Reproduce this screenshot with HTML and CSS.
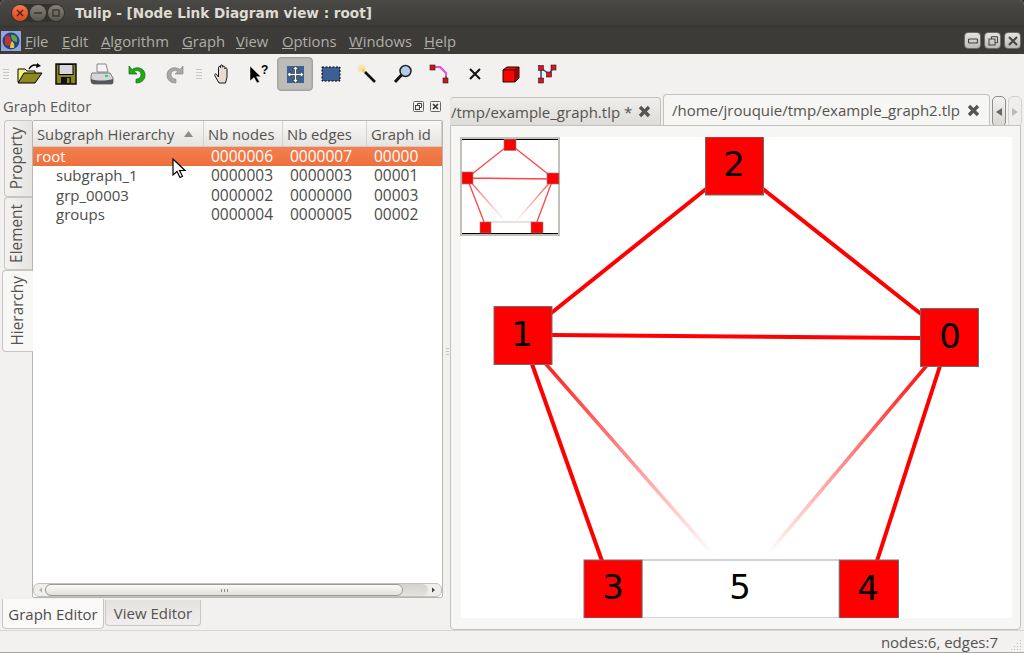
FILE: index.html
```html
<!DOCTYPE html>
<html lang="en">

<head>
    <meta charset="UTF-8">
    <meta name="viewport" content="width=device-width, initial-scale=1.0">
    <title>Tulip - [Node Link Diagram view : root]</title>
    <link rel="stylesheet" href="styles.css">
</head>

<body>
    <div id="window">
        <div id="titlebar">
            <div class="traffic">
                <span class="light close-light">
                    <svg width="8" height="8" viewBox="0 0 8 8"><path d="M1 1l6 6M7 1l-6 6" stroke="#5a1a08" stroke-width="1.4"/></svg>
                </span>
                <span class="light">
                    <svg width="8" height="8" viewBox="0 0 8 8"><path d="M0 4h8" stroke="#35332e" stroke-width="1.6"/></svg>
                </span>
                <span class="light">
                    <svg width="8" height="8" viewBox="0 0 8 8"><rect x="1" y="1" width="6" height="6" fill="none" stroke="#35332e" stroke-width="1.3"/></svg>
                </span>
            </div>
            <div class="title-text">Tulip - [Node Link Diagram view : root]</div>
        </div>

        <div id="menubar">
            <svg class="app-logo" width="20" height="20" viewBox="0 0 20 20">
                <rect width="20" height="20" fill="#8fa8d8"/>
                <circle cx="10" cy="10" r="8.5" fill="#27408b"/>
                <path d="M4 6c3-3 6-1 6 4s-4 6-6 3z" fill="#c8322c"/>
                <path d="M10 4c4-1 7 2 6 7-3 0-6-2-6-7z" fill="#5aa83c"/>
                <path d="M9 17c0-4 1-6 2-7 2 2 3 4 2 7z" fill="#e0c63c"/>
            </svg>
            <div class="menu-items">
                <span class="menu-item m-file"><u>F</u>ile</span>
                <span class="menu-item m-edit"><u>E</u>dit</span>
                <span class="menu-item m-algo"><u>A</u>lgorithm</span>
                <span class="menu-item m-graph"><u>G</u>raph</span>
                <span class="menu-item m-view"><u>V</u>iew</span>
                <span class="menu-item m-options"><u>O</u>ptions</span>
                <span class="menu-item m-windows"><u>W</u>indows</span>
                <span class="menu-item m-help"><u>H</u>elp</span>
            </div>
            <div class="mdi-buttons">
                <span class="mdi-btn"><svg width="10" height="10" viewBox="0 0 10 10"><rect x="0.5" y="3" width="9" height="4" rx="1" fill="none" stroke="#444" stroke-width="1.2"/></svg></span>
                <span class="mdi-btn"><svg width="10" height="10" viewBox="0 0 10 10"><path d="M3.5 3V.7h6v6H7" fill="none" stroke="#444"/><rect x="1" y="3" width="6" height="6" fill="none" stroke="#444"/></svg></span>
                <span class="mdi-btn"><svg width="10" height="10" viewBox="0 0 10 10"><path d="M1 1l8 8M9 1l-8 8" stroke="#444" stroke-width="2"/></svg></span>
            </div>
        </div>

        <div id="toolbar">
            <span class="grip"></span>
            <span class="tool">
                <svg width="26" height="24" viewBox="0 0 26 24">
                    <path d="M1 7h7l2 2h8v11H1z" fill="#f6f37a" stroke="#000"/>
                    <path d="M1 21l6-10h18l-7 10z" fill="#8e8a1e" stroke="#000"/>
                    <path d="M12 7c2-4 6-5 9-3" fill="none" stroke="#000" stroke-width="1.4"/>
                    <path d="M20 1l4 3-5 2z" fill="#000"/>
                </svg>
            </span>
            <span class="tool">
                <svg width="22" height="22" viewBox="0 0 22 22">
                    <rect x="1" y="1" width="20" height="20" fill="#8a8a1c" stroke="#000" stroke-width="1.4"/>
                    <rect x="4" y="1.5" width="14" height="10" fill="#d8d4e0" stroke="#000"/>
                    <rect x="6" y="14" width="10" height="7" fill="#111"/>
                    <rect x="12" y="15" width="2.5" height="5" fill="#8a8a1c"/>
                </svg>
            </span>
            <span class="tool">
                <svg width="24" height="24" viewBox="0 0 24 24">
                    <path d="M7 2h9l2 8H7z" fill="#f4f4f4" stroke="#888"/>
                    <path d="M2 11h18l3 5v5a2 2 0 0 1-2 1H4a3 3 0 0 1-3-3v-5z" fill="#d4d6da" stroke="#77797c"/>
                    <path d="M1 17c6 2 14 2 22 0v4a2 2 0 0 1-2 1H4a3 3 0 0 1-3-3z" fill="#55575a"/>
                    <rect x="15" y="13" width="3" height="2" fill="#39d353"/>
                </svg>
            </span>
            <span class="tool">
                <svg width="20" height="20" viewBox="0 0 20 20">
                    <path d="M1 2v8h8L6 7.5c3-2 7-.5 7 3 0 3-2 4.500-5 4.800V19c6 0 9-3.500 9-8 0-7-8-9-13-5.500z" fill="#1faa17" stroke="#0d6d0a" stroke-width=".7"/>
                </svg>
            </span>
            <span class="tool">
                <svg width="20" height="20" viewBox="0 0 20 20">
                    <path d="M19 2v8h-8l3-2.500c-3-2-7-.5-7 3 0 3 2 4.500 5 4.800V19c-6 0-9-3.500-9-8 0-7 8-9 13-5.500z" fill="#a8a8a6" stroke="#8a8a88" stroke-width=".7"/>
                </svg>
            </span>
            <span class="grip grip-mid"></span>
            <span class="tool">
                <svg width="18" height="20" viewBox="0 0 18 20">
                    <path d="M5 19l-4-7c-1-2 1-3 2-1l1.500 2V3.500c0-1.500 2-1.500 2 0V2c0-1.500 2.200-1.500 2.200 0v1.200c0-1.500 2.200-1.300 2.200.2v1.400c0-1.400 2.100-1.200 2.100.3V13l-1.500 6z" fill="#e6dcd0" stroke="#000" stroke-width=".9"/>
                </svg>
            </span>
            <span class="tool">
                <svg width="20" height="20" viewBox="0 0 20 20">
                    <path d="M1 2v15l4-3.500 3 5.500 2.500-1.300-3-5H12z" fill="#000" stroke="#fff" stroke-width=".5"/>
                    <text x="12" y="10" class="help-mark">?</text>
                </svg>
            </span>
            <span class="tool tool-on">
                <svg width="17" height="17" viewBox="0 0 17 17">
                    <rect width="17" height="17" fill="#3c5f94"/>
                    <path d="M8.500 0l3 3.500H9.500v4h4v-2l3.500 3-3.500 3v-2h-4v4h2l-3 3.500-3-3.500h2v-4h-4v2L0 8.500l3.500-3v2h4v-4h-2z" fill="#fff" stroke="#222" stroke-width=".6"/>
                </svg>
            </span>
            <span class="tool">
                <svg width="20" height="18" viewBox="0 0 20 18">
                    <rect x="1" y="2" width="18" height="14" fill="#3c5f94" stroke="#000" stroke-dasharray="2 1.500"/>
                </svg>
            </span>
            <span class="tool">
                <svg width="20" height="20" viewBox="0 0 20 20">
                    <circle cx="4.500" cy="4.500" r="4" fill="#f2e6b8"/>
                    <path d="M5 5l3 3" stroke="#e8d850" stroke-width="2.600"/>
                    <path d="M8 8l10 10" stroke="#111" stroke-width="2.600"/>
                    <path d="M7 9l10 10" stroke="#999" stroke-width=".8"/>
                </svg>
            </span>
            <span class="tool">
                <svg width="20" height="20" viewBox="0 0 20 20">
                    <circle cx="12.500" cy="7" r="5.500" fill="#b4cdea" stroke="#222" stroke-width="1.500"/>
                    <path d="M8.500 11L2 18" stroke="#111" stroke-width="3"/>
                </svg>
            </span>
            <span class="tool">
                <svg width="20" height="20" viewBox="0 0 20 20">
                    <path d="M4 3h7l6 6v8" fill="none" stroke="#111" stroke-width="1.200"/>
                    <path d="M7 3h4l6 6v3" fill="none" stroke="#f050e0" stroke-width="2"/>
                    <rect x="1" y="1" width="5" height="5" fill="#d8101c" stroke="#222" stroke-width=".6"/>
                    <rect x="14" y="14" width="5" height="5" fill="#d8101c" stroke="#222" stroke-width=".6"/>
                </svg>
            </span>
            <span class="tool">
                <svg width="12" height="12" viewBox="0 0 12 12"><path d="M1 1l10 10M11 1L1 11" stroke="#111" stroke-width="2"/></svg>
            </span>
            <span class="tool">
                <svg width="18" height="18" viewBox="0 0 18 18">
                    <path d="M1 5l4-3h12v11l-4 4H1z" fill="#f00" stroke="#111"/>
                    <path d="M1 5h12v12M13 5l4-3" fill="none" stroke="#111"/>
                    <path d="M13.500 5.500l3-3v10l-3 3z" fill="#a00000"/>
                </svg>
            </span>
            <span class="tool">
                <svg width="20" height="20" viewBox="0 0 20 20">
                    <path d="M4 4v12M4 4l8 6 5-7M12 10v0" fill="none" stroke="#2a4a88" stroke-width="1.500"/>
                    <rect x="1.500" y="1.500" width="5" height="5" fill="#e01020" stroke="#222" stroke-width=".6"/>
                    <rect x="14" y="1" width="5" height="5" fill="#e01020" stroke="#222" stroke-width=".6"/>
                    <rect x="9.500" y="8" width="5" height="5" fill="#e01020" stroke="#222" stroke-width=".6"/>
                    <rect x="1.500" y="14" width="5" height="5" fill="#e01020" stroke="#222" stroke-width=".6"/>
                </svg>
            </span>
        </div>

        <div id="workspace">
            <div id="leftDock">
                <div class="dock-title">
                    <span class="dock-label">Graph Editor</span>
                    <span class="dock-btn"><svg width="11" height="11" viewBox="0 0 11 11"><rect x=".5" y=".5" width="10" height="10" rx="1" fill="none" stroke="#666"/><path d="M4.500 4V2.500h4v4H7" fill="none" stroke="#444"/><rect x="2.500" y="4.500" width="4" height="4" fill="none" stroke="#444"/></svg></span>
                    <span class="dock-btn"><svg width="11" height="11" viewBox="0 0 11 11"><rect x=".5" y=".5" width="10" height="10" rx="1" fill="none" stroke="#666"/><path d="M3 3l5 5M8 3l-5 5" stroke="#333" stroke-width="1.600"/></svg></span>
                </div>
                <div class="dock-body">
                    <div class="side-tabs">
                        <div class="side-tab tab-property"><span>Property</span></div>
                        <div class="side-tab tab-element"><span>Element</span></div>
                        <div class="side-tab tab-hierarchy active"><span>Hierarchy</span></div>
                    </div>
                    <div class="tree-frame">
                        <div class="tree-head">
                            <div class="head-cell">Subgraph Hierarchy
                                <svg class="sort-arrow" width="9" height="6" viewBox="0 0 9 6"><path d="M4.500 0L9 6H0z" fill="#8a8a86"/></svg>
                            </div>
                            <div class="head-cell">Nb nodes</div>
                            <div class="head-cell">Nb edges</div>
                            <div class="head-cell">Graph id</div>
                        </div>
                        <div class="tree-rows">
                            <div class="row selected">
                                <div class="cell name">root</div>
                                <div class="cell num">0000006</div>
                                <div class="cell num">0000007</div>
                                <div class="cell num">00000</div>
                            </div>
                            <div class="row">
                                <div class="cell name child">subgraph_1</div>
                                <div class="cell num">0000003</div>
                                <div class="cell num">0000003</div>
                                <div class="cell num">00001</div>
                            </div>
                            <div class="row">
                                <div class="cell name child">grp_00003</div>
                                <div class="cell num">0000002</div>
                                <div class="cell num">0000000</div>
                                <div class="cell num">00003</div>
                            </div>
                            <div class="row">
                                <div class="cell name child">groups</div>
                                <div class="cell num">0000004</div>
                                <div class="cell num">0000005</div>
                                <div class="cell num">00002</div>
                            </div>
                        </div>
                        <div class="hscroll">
                            <svg width="10" height="12" viewBox="1 0 10 12"><path d="M8 3.500v5L5 6z" fill="#b5b5b2"/></svg>
                            <div class="hscroll-track">
                                <div class="hscroll-thumb"><span class="thumb-dots"></span></div>
                            </div>
                            <svg width="12" height="12" viewBox="0 0 12 12"><path d="M4 3.500v5L7 6z" fill="#444"/></svg>
                        </div>
                        <svg id="cursor" width="16" height="22" viewBox="0 0 16 22">
                            <path d="M1 1v16l4-3.500 3 6 2.500-1.200-3-5.800h5.500z" fill="#fff" stroke="#000" stroke-width="1.200"/>
                        </svg>
                    </div>
                </div>
                <div class="bottom-tabs">
                    <div class="bottom-tab active">Graph Editor</div>
                    <div class="bottom-tab">View Editor</div>
                </div>
            </div>

            <div class="splitter"><span></span></div>

            <div id="viewArea">
                <div class="view-tabs">
                    <div class="view-tab first">
                        <span>/tmp/example_graph.tlp *</span>
                        <svg class="tab-close" width="13" height="13" viewBox="0 0 13 13"><path d="M2 2l9 9M11 2l-9 9" stroke="#555" stroke-width="3.400"/></svg>
                    </div>
                    <div class="view-tab active">
                        <span>/home/jrouquie/tmp/example_graph2.tlp</span>
                        <svg class="tab-close" width="13" height="13" viewBox="0 0 13 13"><path d="M2 2l9 9M11 2l-9 9" stroke="#555" stroke-width="3.400"/></svg>
                    </div>
                    <div class="tab-scroll on"><svg width="6" height="8" viewBox="0 0 6 8"><path d="M6 0v8L0 4z" fill="#666"/></svg></div>
                    <div class="tab-scroll"><svg width="6" height="8" viewBox="0 0 6 8"><path d="M0 0v8l6-4z" fill="#bbb"/></svg></div>
                </div>
                <div class="view-pane">
                    <svg id="graphCanvas" width="551" height="481" viewBox="461 137 551 481">
                        <defs>
                            <linearGradient id="fadeLeft" gradientUnits="userSpaceOnUse" x1="548" y1="366" x2="713" y2="555">
                                <stop offset="0" stop-color="#f22"/>
                                <stop offset="1" stop-color="#fff"/>
                            </linearGradient>
                            <linearGradient id="fadeRight" gradientUnits="userSpaceOnUse" x1="925" y1="367" x2="767" y2="555">
                                <stop offset="0" stop-color="#f11"/>
                                <stop offset="1" stop-color="#fff"/>
                            </linearGradient>
                        </defs>
                        <g class="edges">
                            <path d="M706 189L550 314"/>
                            <path d="M763 189L921 314"/>
                            <path d="M552 335L920 338"/>
                            <path d="M532 364L602 561"/>
                            <path d="M940 366L877 561"/>
                            <path class="fade-left" d="M545 363L716 558"/>
                            <path class="fade-right" d="M928 364L765 557"/>
                        </g>
                        <g class="nodes">
                            <rect x="642" y="560" width="197" height="58" class="white-node"/>
                            <rect x="705.500" y="137" width="58" height="58"/>
                            <rect x="494" y="306.500" width="58" height="58"/>
                            <rect x="920.500" y="308.500" width="58" height="58"/>
                            <rect x="584" y="560" width="58" height="58"/>
                            <rect x="839.500" y="560" width="59" height="58"/>
                        </g>
                        <g class="labels">
                            <text x="734" y="176">2</text>
                            <text x="522" y="346">1</text>
                            <text x="950" y="348">0</text>
                            <text x="613" y="599">3</text>
                            <text x="740" y="599">5</text>
                            <text x="868" y="600">4</text>
                        </g>
                    </svg>
                    <svg id="minimap" width="100" height="99" viewBox="0 0 100 99">
                        <rect x="1" y="1" width="98" height="97" fill="#fff" stroke="#c4c0ba" stroke-width="2"/>
                        <path d="M2 2.500h96M2 96.500h96" stroke="#000"/>
                        <defs>
                            <linearGradient id="miniLeft" x1="0" y1="0" x2="1" y2="1">
                                <stop offset="0" stop-color="#f44"/>
                                <stop offset="1" stop-color="#fff"/>
                            </linearGradient>
                            <linearGradient id="miniRight" x1="1" y1="0" x2="0" y2="1">
                                <stop offset="0" stop-color="#f44"/>
                                <stop offset="1" stop-color="#fff"/>
                            </linearGradient>
                        </defs>
                        <g fill="none" stroke="#f44" stroke-width="1.300">
                            <path d="M50 7L7 41M50 7L93 41M7 41L93 42M7 41L26 90M93 42L75 90"/>
                            <path d="M8 42L45 84" stroke="url(#miniLeft)"/>
                            <path d="M92 43L56 84" stroke="url(#miniRight)"/>
                        </g>
                        <path d="M26 85h50" stroke="#c8c8c8" stroke-width="1"/>
                        <g fill="#f00" stroke="#888" stroke-width=".6">
                            <rect x="44" y="2.500" width="12" height="11"/>
                            <rect x="2" y="35" width="11" height="12"/>
                            <rect x="87" y="36" width="12" height="11"/>
                            <rect x="20" y="85" width="11" height="11"/>
                            <rect x="71" y="85" width="12" height="11"/>
                        </g>
                    </svg>
                </div>
            </div>
        </div>

        <div id="statusbar">
            <span>nodes:6, edges:7</span>
            <svg class="size-grip" width="11" height="11" viewBox="0 0 11 11">
                <path d="M9 1h1v1H9zM6 4h1v1H6zM9 4h1v1H9zM3 7h1v1H3zM6 7h1v1H6zM9 7h1v1H9zM0 10h1v1H0zM3 10h1v1H3zM6 10h1v1H6zM9 10h1v1H9z" fill="#c4c0ba"/>
            </svg>
        </div>
    </div>
</body>

</html>
```

FILE: styles.css
```css
* {
    box-sizing: border-box;
}

html,
body {
    margin: 0;
    padding: 0;
    background-color: #2c2b28;
}

body {
    font-family: "Open Sans", "Noto Sans", Arial, sans-serif;
    font-size: 15px;
    color: #3c3c3c;
}

#window {
    width: 1024px;
    height: 653px;
    display: flex;
    flex-direction: column;
    background-color: #f2f1f0;
    border-radius: 5px 5px 0 0;
    overflow: hidden;
    border-bottom: 1px solid #a8a6a0;
}

/* title bar */
#titlebar {
    height: 27px;
    display: flex;
    align-items: center;
    background: linear-gradient(#4a4945, #3c3b37);
    border-bottom: 1px solid #34332f;
    flex: none;
}

.traffic {
    display: flex;
    gap: 2px;
    margin-left: 11px;
    padding: 1px;
    border-radius: 10px;
    background-color: #33322e;
}

.light {
    width: 16px;
    height: 16px;
    border-radius: 50%;
    display: flex;
    align-items: center;
    justify-content: center;
    background: linear-gradient(#85827a, #5a574f);
}

.close-light {
    background: linear-gradient(#f4794a, #d9481c);
}

.title-text {
    margin-left: 10px;
    font-family: "DejaVu Sans", sans-serif;
    font-weight: bold;
    font-size: 13.600px;
    color: #dfdbd2;
    white-space: nowrap;
}

/* menu */
#menubar {
    height: 27px;
    display: flex;
    align-items: center;
    background-color: #3c3b37;
    flex: none;
}

.app-logo {
    margin-left: 1px;
}

.menu-items {
    display: flex;
    margin-left: 4px;
    color: #b0aea8;
    font-size: 14.800px;
}

.menu-item {
    white-space: nowrap;
}

.m-file { width: 37px; }
.m-edit { width: 39px; }
.m-algo { width: 81px; }
.m-graph { width: 54px; }
.m-view { width: 46px; }
.m-options { width: 67px; }
.m-windows { width: 75px; }
.m-help { width: 40px; }

.mdi-buttons {
    display: flex;
    gap: 3px;
    margin-left: auto;
    margin-right: 3px;
}

.mdi-btn {
    width: 17px;
    height: 17px;
    display: flex;
    align-items: center;
    justify-content: center;
    border: 1px solid #6e6c66;
    border-radius: 4px;
    background: linear-gradient(#e6e4e0, #bcbab4);
}

/* toolbar */
#toolbar {
    height: 40px;
    display: flex;
    align-items: center;
    padding-left: 3px;
    flex: none;
}

.grip {
    width: 6px;
    height: 11px;
    margin-right: 3px;
    background: repeating-linear-gradient(#c9c7c2 0 1px, transparent 1px 3px);
}

.grip-mid {
    margin: 0 3px 0 4px;
}

.tool {
    width: 36px;
    height: 34px;
    display: flex;
    align-items: center;
    justify-content: center;
}

.tool-on {
    background-color: #bdbcb8;
    border: 1px solid #a5a3a0;
    border-radius: 4px;
    box-shadow: inset 0 0 2px #9a9894;
}

.help-mark {
    font-family: "Liberation Sans", sans-serif;
    font-weight: bold;
    font-size: 12px;
    fill: #000;
}

/* main area */
#workspace {
    flex: 1;
    display: flex;
    min-height: 0;
}

#leftDock {
    width: 444px;
    display: flex;
    flex-direction: column;
    flex: none;
}

.dock-title {
    height: 26px;
    display: flex;
    align-items: center;
    padding: 0 3px 2px 3px;
    gap: 6px;
}

.dock-label {
    margin-right: auto;
    font-size: 14.800px;
    color: #5a5a58;
}

.dock-btn {
    display: flex;
}

.dock-body {
    flex: 1;
    display: flex;
    min-height: 0;
}

.side-tabs {
    width: 32px;
    padding-left: 2px;
    display: flex;
    flex-direction: column;
    flex: none;
}

.side-tab {
    display: flex;
    align-items: center;
    justify-content: center;
    padding-right: 4px;
    margin-left: 2px;
    background: linear-gradient(to right, #f4f3f2, #e6e4e1);
    border: 1px solid #c8c6c0;
    border-right: none;
    border-radius: 4px 0 0 4px;
    font-size: 15.400px;
    color: #55534f;
}

.side-tab span {
    writing-mode: vertical-rl;
    transform: rotate(180deg);
}

.tab-property { height: 77px; }
.tab-element { height: 73px; }

.tab-hierarchy {
    height: 82px;
    padding-right: 2px;
    margin-left: 0;
    background: #f8f8f7;
    margin-right: -1px;
    position: relative;
    z-index: 1;
}

.tree-frame {
    position: relative;
    width: 411px;
    margin: 0;
    display: flex;
    flex-direction: column;
    background-color: #fff;
    border: 1px solid #b8b6b0;
    border-radius: 2px;
}

.tree-head {
    height: 26px;
    display: grid;
    grid-template-columns: 171px 79px 84px 1fr;
    background: linear-gradient(#f8f8f7, #e6e4e1);
    border-bottom: 1px solid #cfcdc8;
    flex: none;
}

.head-cell {
    display: flex;
    align-items: center;
    padding: 1px 0 0 4px;
    white-space: nowrap;
    color: #55534f;
    border-right: 1px solid #d4d2cd;
    font-size: 14.800px;
}

.sort-arrow {
    margin-left: 10px;
}

.tree-rows {
    flex: 1;
}

.row {
    height: 19.300px;
    display: grid;
    grid-template-columns: 171px 79px 84px 1fr;
    align-items: center;
}

.row.selected {
    background: linear-gradient(#f47f4e, #ee6f3e);
    color: #fff;
}

.cell {
    white-space: nowrap;
    font-size: 15px;
    line-height: 17px;
    color: #4c4c4a;
}

.selected .cell {
    color: #fff;
}

.name {
    padding-left: 3px;
}

.child {
    padding-left: 23px;
}

.num {
    padding-left: 7px;
    font-size: 15.500px;
}

.hscroll {
    height: 14px;
    display: flex;
    align-items: center;
    padding: 0 1px;
    background-color: #efeeec;
    border: 1px solid #c4c2bc;
    border-radius: 6px;
    flex: none;
}

.hscroll-track {
    flex: 1;
    height: 12px;
    background: linear-gradient(#d4d2ce, #e4e2de);
    border-radius: 6px;
    min-width: 0;
}

.hscroll-thumb {
    width: 358px;
    height: 12px;
    display: flex;
    align-items: center;
    justify-content: center;
    background: linear-gradient(#fbfbfa, #e2e0dc);
    border: 1px solid #9d9b95;
    border-radius: 6px;
}

.thumb-dots {
    width: 7px;
    height: 3px;
    background: repeating-linear-gradient(to right, #8a8a86 0 1px, transparent 1px 3px);
}

#cursor {
    position: absolute;
    left: 139px;
    top: 37px;
}

.bottom-tabs {
    height: 32px;
    display: flex;
    align-items: flex-start;
    padding: 2px 0 0 2px;
    flex: none;
}

.bottom-tab {
    width: 96px;
    height: 26px;
    margin-left: 1px;
    display: flex;
    align-items: center;
    justify-content: center;
    background: linear-gradient(#e4e2df, #f0efed);
    border: 1px solid #c8c6c0;
    border-top: none;
    border-radius: 0 0 4px 4px;
    font-size: 15px;
    white-space: nowrap;
    color: #55534f;
}

.bottom-tab.active {
    height: 30px;
    width: 102px;
    margin-left: 0;
    margin-top: -1px;
    background: #f9f9f8;
    color: #4c4c4a;
}

.splitter {
    width: 6px;
    display: flex;
    align-items: center;
    justify-content: center;
    flex: none;
}

.splitter span {
    width: 3px;
    height: 8px;
    margin-bottom: 20px;
    background: repeating-linear-gradient(#c4c2bc 0 1px, transparent 1px 3px);
}

#viewArea {
    flex: 1;
    min-width: 0;
    display: flex;
    flex-direction: column;
}

.view-tabs {
    height: 31px;
    display: flex;
    align-items: flex-end;
    flex: none;
}

.view-tab {
    height: 28px;
    display: flex;
    align-items: center;
    justify-content: space-between;
    padding: 0 9px 0 1px;
    background: linear-gradient(#efeeec, #dedcd8);
    border: 1px solid #c4c2bc;
    border-bottom: none;
    border-radius: 4px 4px 0 0;
    font-size: 15px;
    white-space: nowrap;
    color: #55534f;
}

.view-tab.first {
    width: 211px;
    border-left: none;
}

.view-tab.active {
    width: 327px;
    height: 31px;
    margin-left: 2px;
    padding-left: 8px;
    background: #f6f6f5;
}

.tab-scroll {
    width: 14px;
    height: 31px;
    margin-left: 2px;
    margin-bottom: -2px;
    display: flex;
    align-items: center;
    justify-content: center;
    border: 1px solid #d4d2cd;
    border-radius: 5px;
    background-color: #efeeec;
}

.tab-scroll.on {
    border-color: #8e8c86;
    background: linear-gradient(#f2f1f0, #d8d6d2);
}

.view-pane {
    position: relative;
    height: 505px;
    margin-right: 3px;
    padding: 11px 9px 12px 10px;
    background-color: #f6f6f5;
    border: 1px solid #c4c2bc;
    border-radius: 0 0 4px 4px;
}

#graphCanvas {
    display: block;
    background-color: #fff;
}

#minimap {
    position: absolute;
    left: 9px;
    top: 11px;
}

.edges path {
    fill: none;
    stroke: #f00;
    stroke-width: 4;
}

.edges .fade-left {
    stroke: url(#fadeLeft);
    stroke-width: 3.500;
}

.edges .fade-right {
    stroke: url(#fadeRight);
    stroke-width: 3.500;
}

.nodes rect {
    fill: #f00;
    stroke: #6e6e6e;
    stroke-width: 1;
}

.nodes .white-node {
    fill: #fff;
    stroke: #a8a8a8;
}

.labels text {
    font-family: "DejaVu Sans", sans-serif;
    font-size: 34px;
    text-anchor: middle;
    fill: #000;
}

#statusbar {
    height: 22px;
    display: flex;
    align-items: center;
    justify-content: flex-end;
    padding-right: 2px;
    gap: 13px;
    border-top: 1px solid #d8d6d2;
    flex: none;
    font-size: 15px;
    color: #55534f;
}

.size-grip {
    margin-top: 6px;
}
```
